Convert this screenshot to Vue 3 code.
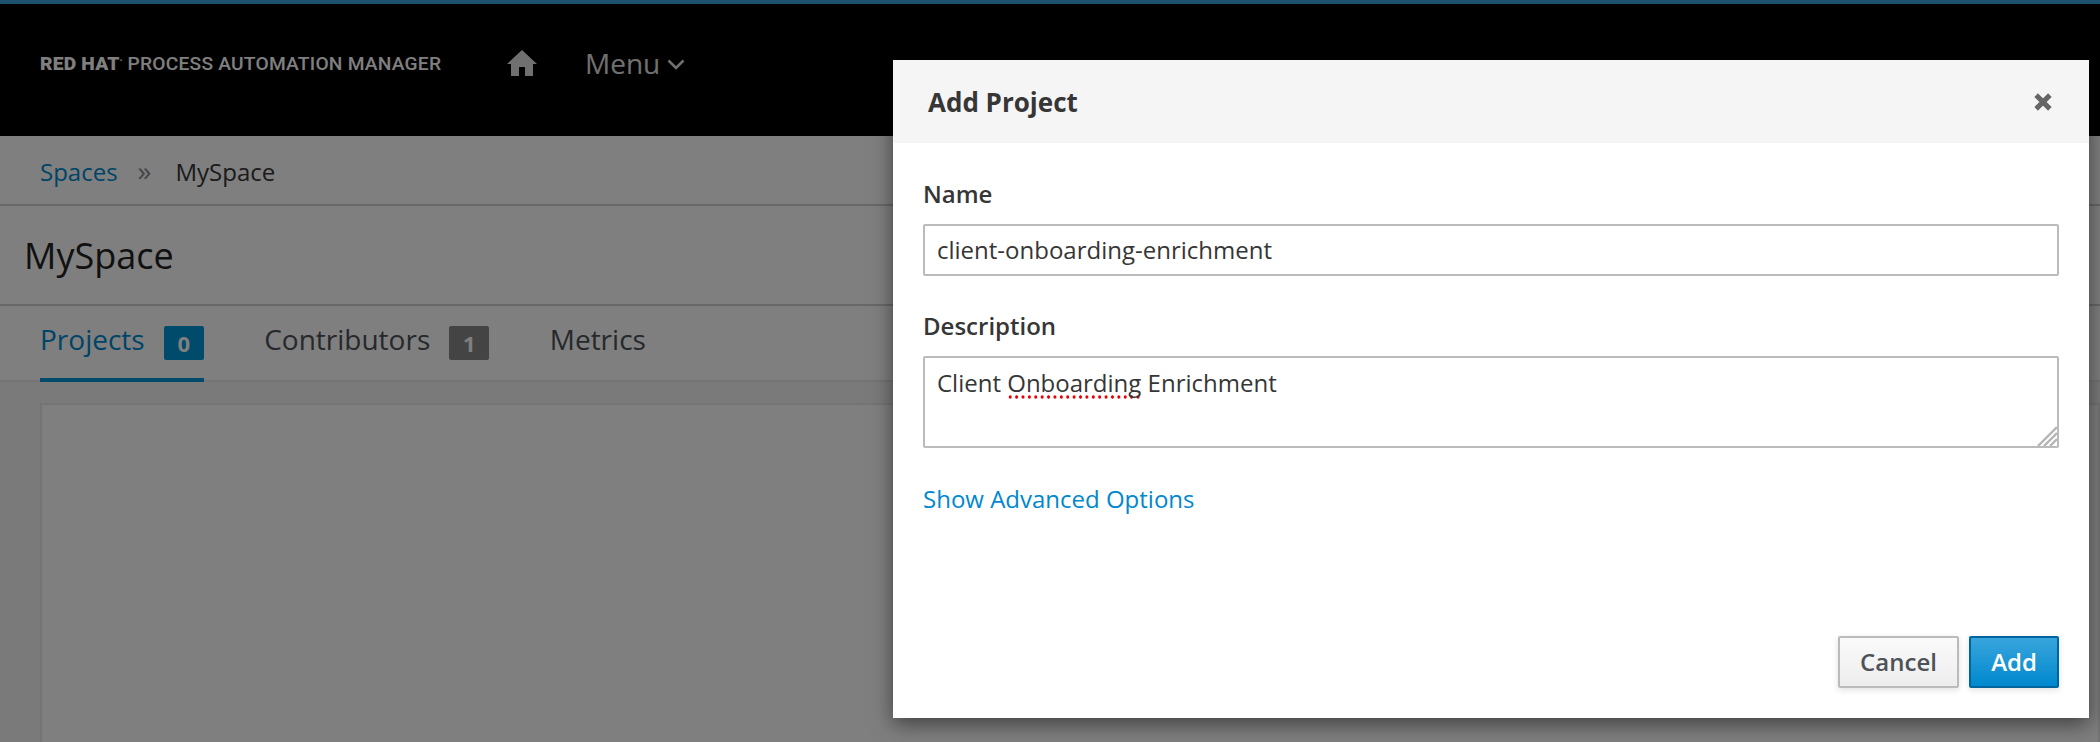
<script setup>
import { ref } from 'vue';

const tabs = ref([
  { label: 'Projects', count: 0, active: true },
  { label: 'Contributors', count: 1 },
  { label: 'Metrics' }
]);
const projectName = ref('client-onboarding-enrichment');
</script>

<template>
  <div class="page">
    <div class="topline"></div>
    <header class="navbar">
      <div class="brand"><b>RED HAT</b><sup>*</sup> PROCESS AUTOMATION MANAGER</div>
      <svg class="home" viewBox="0 0 30 26">
        <path d="M15 0 L30 14 L26 14 L26 26 L18 26 L18 17 L12 17 L12 26 L4 26 L4 14 L0 14 Z" fill="currentColor" />
      </svg>
      <div class="menu">
        Menu
        <svg class="chevron" viewBox="0 0 18 11"><path d="M1.5 1.5 L9 9 L16.5 1.5" fill="none" stroke="currentColor" stroke-width="2.6" /></svg>
      </div>
    </header>
    <nav class="crumbs">
      <a class="crumb-link">Spaces</a>
      <span class="crumb-sep">»</span>
      <span>MySpace</span>
    </nav>
    <h1 class="title">MySpace</h1>
    <div class="tabs">
      <div v-for="tab in tabs" :key="tab.label" class="tab" :class="{ active: tab.active }">
        <span>{{ tab.label }}</span>
        <span v-if="tab.count !== undefined" class="badge">{{ tab.count }}</span>
      </div>
    </div>
    <main class="content">
      <div class="panel"></div>
    </main>

    <div class="backdrop"></div>
    <section class="modal">
      <div class="modal-head">
        <h2>Add Project</h2>
        <svg class="close" viewBox="0 0 16 16"><path d="M2.5 2.5 L13.5 13.5 M13.5 2.5 L2.5 13.5" stroke="currentColor" stroke-width="4" fill="none" /></svg>
      </div>
      <div class="modal-body">
        <label class="field-label">Name</label>
        <div class="input">{{ projectName }}</div>
        <label class="field-label second">Description</label>
        <div class="textarea">
          Client <span class="misspelled">Onboarding</span> Enrichment
          <svg class="grip" viewBox="0 0 20 20">
            <path d="M20 1 L1 20 M20 7 L7 20 M20 13 L13 20" stroke="#b5b5b5" stroke-width="2.4" fill="none" />
          </svg>
        </div>
        <a class="advanced">Show Advanced Options</a>
      </div>
      <div class="modal-foot">
        <button class="btn">Cancel</button>
        <button class="btn primary">Add</button>
      </div>
    </section>
  </div>
</template>

<style scoped>
.page {
  position: relative;
  width: 2100px;
  height: 742px;
  overflow: hidden;
  background: #f5f5f5;
  font-family: "Open Sans", sans-serif;
  color: #363636;
}
.topline {
  height: 4px;
  background: #39a5dc;
}
.navbar {
  display: flex;
  align-items: center;
  height: 132px;
  padding: 0 0 14px 40px;
  box-sizing: border-box;
  background: #000;
  color: #e0e0e0;
}
.brand {
  width: 467px;
  font-family: "Roboto", sans-serif;
  font-size: 19.2px;
  font-weight: 500;
  letter-spacing: 0.22px;
  color: #fff;
}
.brand b {
  font-weight: 900;
}
.brand sup {
  font-size: 6px;
}
.home {
  width: 30px;
  height: 26px;
  margin-right: 48px;
}
.menu {
  display: flex;
  align-items: center;
  gap: 7px;
  font-size: 28px;
}
.chevron {
  width: 18px;
  height: 11px;
  margin-top: 3px;
}
.crumbs {
  display: flex;
  align-items: center;
  height: 70px;
  padding-left: 40px;
  padding-top: 2px;
  gap: 20px;
  box-sizing: border-box;
  background: #fff;
  border-bottom: 2px solid #d1d1d1;
  font-size: 24px;
}
.crumb-link {
  color: #0088ce;
}
.crumb-sep {
  color: #8b8d8f;
  font-size: 28px;
  line-height: 1;
  margin-top: -3px;
  margin-right: 4px;
}
.title {
  display: flex;
  align-items: center;
  height: 100px;
  margin: 0;
  padding: 0 0 0 24px;
  box-sizing: border-box;
  background: #fff;
  border-bottom: 2px solid #d1d1d1;
  font-size: 36px;
  font-weight: 400;
  color: #222;
}
.tabs {
  display: flex;
  height: 76px;
  padding-left: 40px;
  gap: 60.5px;
  box-sizing: border-box;
  background: #fff;
  border-bottom: 2px solid #e8e8e8;
}
.tab {
  display: flex;
  align-items: center;
  gap: 19px;
  height: 76px;
  padding-bottom: 10px;
  box-sizing: border-box;
  font-size: 28px;
  color: #4d5258;
}
.tab.active {
  color: #0088ce;
  border-bottom: 4px solid #0094d8;
  padding-bottom: 6px;
}
.badge {
  display: flex;
  align-items: center;
  justify-content: center;
  width: 40px;
  height: 34px;
  margin-top: 7px;
  border-radius: 2px;
  background: #888;
  color: #fff;
  font-size: 22px;
  font-weight: 700;
}
.tab.active .badge {
  background: #0094d8;
}
.content {
  padding: 21px 0 0 40px;
}
.panel {
  height: 400px;
  background: #fff;
  border: 2px solid #e8e8e8;
  box-sizing: border-box;
}
.backdrop {
  position: absolute;
  inset: 0;
  background: rgba(0, 0, 0, 0.5);
}
.modal {
  position: absolute;
  left: 893px;
  top: 60px;
  width: 1196px;
  height: 658px;
  display: flex;
  flex-direction: column;
  background: #fff;
  box-shadow: 0 6px 20px rgba(0, 0, 0, 0.5);
}
.modal-head {
  display: flex;
  align-items: center;
  justify-content: space-between;
  height: 83px;
  padding: 0 36px 0 35px;
  box-sizing: border-box;
  background: #f5f5f5;
  flex-shrink: 0;
}
.modal-head h2 {
  margin: 0;
  font-size: 26px;
  font-weight: 700;
  color: #363636;
}
.close {
  width: 20px;
  height: 20px;
  color: #666;
}
.modal-body {
  flex: 1;
  padding: 34px 30px 0;
  display: flex;
  flex-direction: column;
}
.field-label {
  font-size: 24px;
  font-weight: 600;
  line-height: 33px;
  color: #363636;
}
.field-label.second {
  margin-top: 33px;
}
.input,
.textarea {
  box-sizing: border-box;
  margin-top: 14px;
  border: 2px solid #bbb;
  border-radius: 2px;
  font-size: 24px;
  color: #363636;
  padding: 0 12px;
}
.input {
  height: 52px;
  line-height: 47px;
}
.textarea {
  position: relative;
  height: 92px;
  padding-top: 8px;
  line-height: 33px;
}
.misspelled {
  background: radial-gradient(circle, #e60000 1.4px, transparent 1.9px) 0 100% / 6.4px 4px repeat-x;
}
.grip {
  position: absolute;
  right: 0;
  bottom: 0;
  width: 20px;
  height: 20px;
}
.advanced {
  margin-top: 34px;
  font-size: 24px;
  color: #0088ce;
}
.modal-foot {
  display: flex;
  justify-content: flex-end;
  gap: 10px;
  padding: 0 30px 30px;
}
.btn {
  height: 52px;
  width: 121px;
  padding: 0 0 2px;
  border: 2px solid #bbb;
  border-radius: 2px;
  background: linear-gradient(#fafafa, #ededed);
  font-family: "Open Sans", sans-serif;
  font-size: 24px;
  font-weight: 600;
  color: #4d5258;
  box-shadow: 0 2px 6px rgba(0, 0, 0, 0.12);
}
.btn.primary {
  width: 90px;
  border-color: #00659c;
  background: linear-gradient(#39a5dc, #0088ce);
  color: #fff;
}
</style>

<style>
html, body {
  margin: 0;
  background: #fff;
}
</style>
